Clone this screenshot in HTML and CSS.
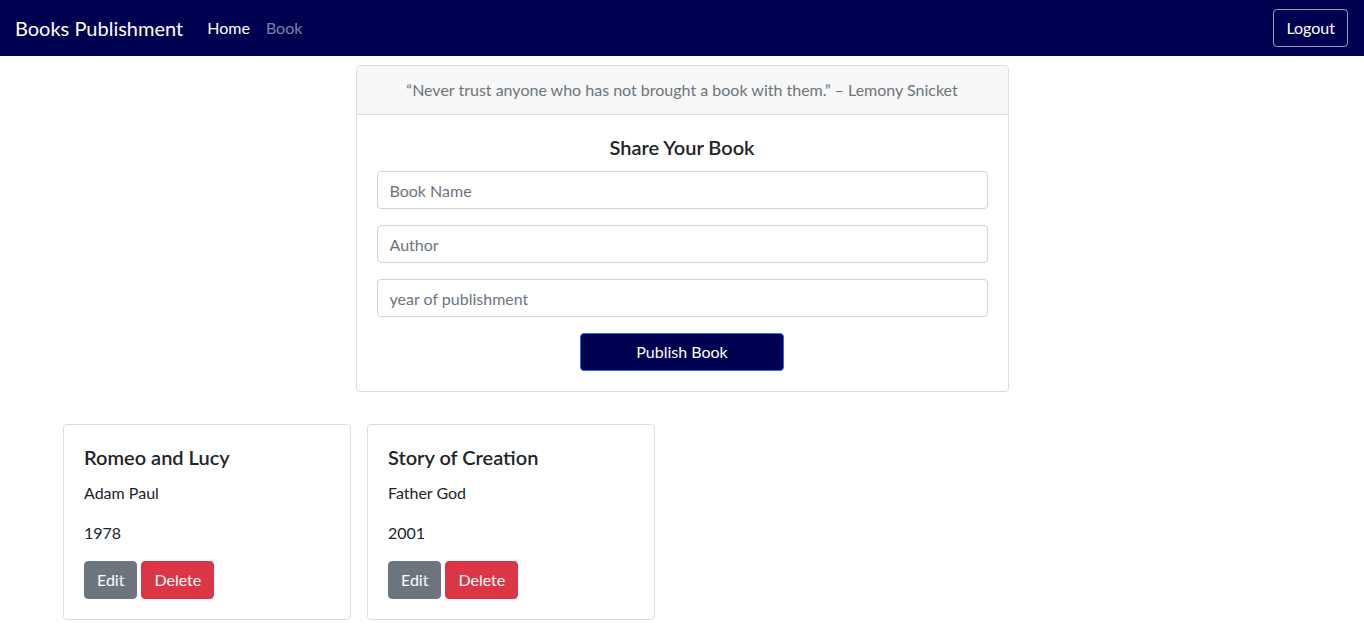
FILE: index.html
```html
<!DOCTYPE html>
<html lang="en">
<head>
<meta charset="utf-8">
<title>Books Publishment</title>
<link rel="stylesheet" href="styles.css">
</head>
<body>
<nav class="navbar">
  <a class="brand" href="#">Books Publishment</a>
  <ul class="nav-links">
    <li><a class="nav-link active" href="#">Home</a></li>
    <li><a class="nav-link" href="#">Book</a></li>
  </ul>
  <button class="btn btn-logout" type="button">Logout</button>
</nav>

<main class="page">
  <section class="share-card">
    <div class="share-header">“Never trust anyone who has not brought a book with them.” – Lemony Snicket</div>
    <form class="share-body">
      <h5 class="share-title">Share Your Book</h5>
      <input class="field" type="text" placeholder="Book Name">
      <input class="field" type="text" placeholder="Author">
      <input class="field" type="text" placeholder="year of publishment">
      <div class="submit-row">
        <button class="btn btn-publish" type="button">Publish Book</button>
      </div>
    </form>
  </section>

  <section class="book-list">
    <article class="book-card">
      <h5 class="book-title">Romeo and Lucy</h5>
      <p class="book-text">Adam Paul</p>
      <p class="book-text">1978</p>
      <div class="book-actions">
        <button class="btn btn-edit" type="button">Edit</button>
        <button class="btn btn-delete" type="button">Delete</button>
      </div>
    </article>
    <article class="book-card">
      <h5 class="book-title">Story of Creation</h5>
      <p class="book-text">Father God</p>
      <p class="book-text">2001</p>
      <div class="book-actions">
        <button class="btn btn-edit" type="button">Edit</button>
        <button class="btn btn-delete" type="button">Delete</button>
      </div>
    </article>
  </section>
</main>
</body>
</html>
```

FILE: styles.css
```css
* { box-sizing: border-box; }

html, body {
  margin: 0;
  padding: 0;
}

body {
  font-family: "Lato", "Open Sans", "Liberation Sans", sans-serif;
  font-size: 16px;
  line-height: 1.5;
  color: #212529;
  background: #fff;
}

.navbar {
  height: 56px;
  background: #000050;
  display: flex;
  align-items: center;
  padding: 0 16px 0 15px;
}

.brand {
  color: #fff;
  text-decoration: none;
  font-size: 20px;
  line-height: 30px;
  margin-right: 16px;
}

.nav-links {
  display: flex;
  list-style: none;
  margin: 0;
  padding: 0;
  flex: 1;
}

.nav-link {
  display: block;
  padding: 8px 8px;
  color: rgba(255, 255, 255, 0.5);
  text-decoration: none;
}

.nav-link.active {
  color: #fff;
}

.btn {
  font-family: inherit;
  font-size: 16px;
  line-height: 24px;
  padding: 6px 12px;
  border: 1px solid transparent;
  border-radius: 4px;
  cursor: pointer;
  color: #fff;
}

.btn-logout {
  background: transparent;
  border-color: #9a9ab4;
  color: #fff;
  padding: 6px 12px;
}

.page {
  padding-top: 9px;
}

.share-card {
  width: 653px;
  margin: 0 auto;
  border: 1px solid #dcdcdc;
  border-radius: 4px;
  background: #fff;
}

.share-header {
  background: #f7f7f7;
  border-bottom: 1px solid #dcdcdc;
  padding: 12px 20px;
  text-align: center;
  color: #6c757d;
  border-radius: 4px 4px 0 0;
}

.share-body {
  padding: 20px;
  margin: 0;
  display: flex;
  flex-direction: column;
}

.share-title {
  margin: 0 0 12px;
  font-size: 20px;
  line-height: 24px;
  font-weight: 600;
  text-align: center;
}

.field {
  display: block;
  width: 100%;
  height: 38px;
  padding: 6px 12px;
  margin: 0 0 16px;
  font-family: inherit;
  font-size: 16px;
  line-height: 24px;
  color: #495057;
  border: 1px solid #ced4da;
  border-radius: 4px;
  background: #fff;
}

.field::placeholder {
  color: #6c757d;
}

.submit-row {
  display: flex;
  justify-content: center;
}

.btn-publish {
  width: 204px;
  height: 38px;
  background: #000050;
  border-color: #1f6cf5;
}

.book-list {
  display: flex;
  gap: 16px;
  padding: 32px 0 0 63px;
}

.book-card {
  width: 288px;
  border: 1px solid #dcdcdc;
  border-radius: 4px;
  padding: 20px;
}

.book-title {
  margin: 0 0 12px;
  font-size: 20px;
  line-height: 24px;
  font-weight: 600;
}

.book-text {
  margin: 0 0 16px;
}

.book-actions {
  display: flex;
  gap: 4px;
}

.btn-edit {
  background: #6c757d;
  border-color: #6c757d;
}

.btn-delete {
  background: #dc3545;
  border-color: #dc3545;
}
```
